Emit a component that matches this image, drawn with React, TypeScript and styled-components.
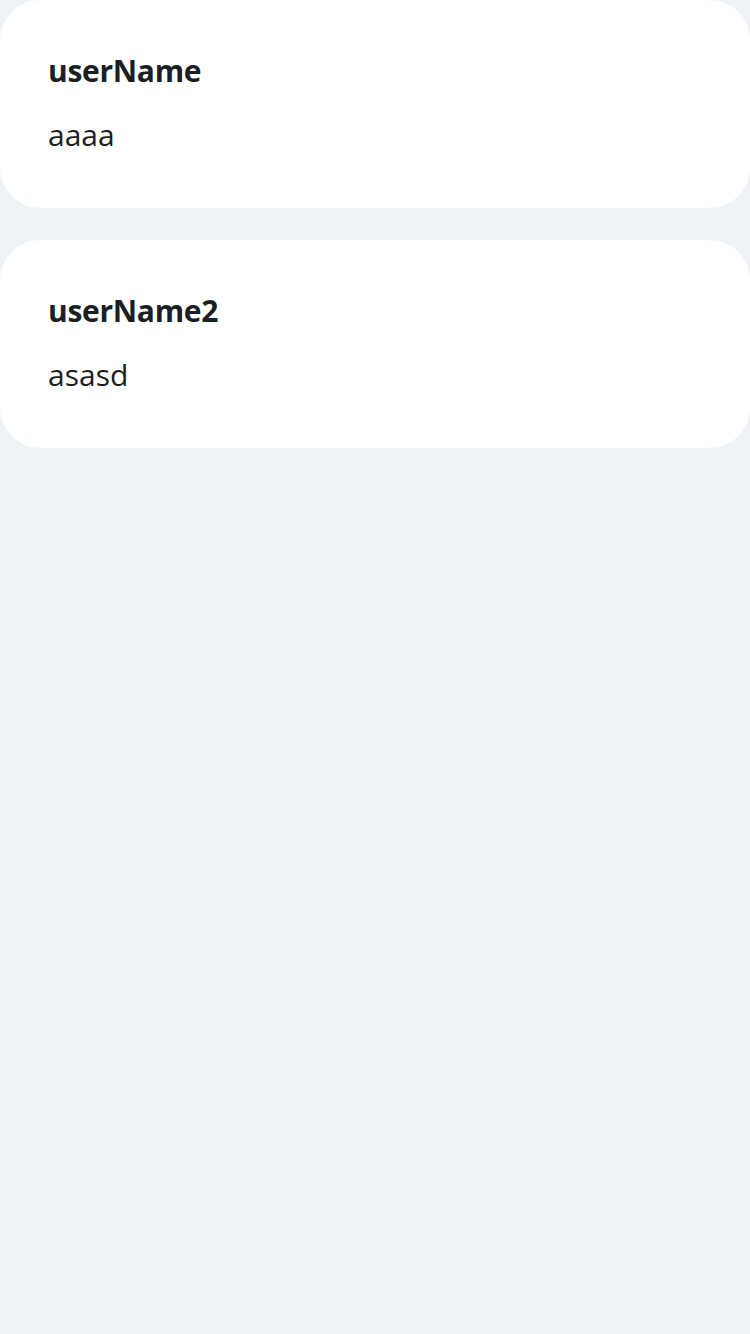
import React from 'react';
import styled, { createGlobalStyle } from 'styled-components';

const GlobalStyle = createGlobalStyle`
  html, body {
    margin: 0;
    padding: 0;
    background-color: #eef3f6;
    font-family: 'Open Sans', 'Noto Sans', sans-serif;
    color: #1b1f23;
  }
`;

const Page = styled.div`
  display: flex;
  flex-direction: column;
  gap: 32px;
  min-height: 1334px;
  background-color: #eef3f6;
`;

const Card = styled.div`
  display: flex;
  flex-direction: column;
  gap: 18px;
  height: 208px;
  box-sizing: border-box;
  padding: 48px 48px 0;
  background-color: #ffffff;
  border-radius: 40px;
`;

const Title = styled.div`
  font-size: 30px;
  font-weight: 700;
  line-height: 46px;
  letter-spacing: -0.3px;
`;

const Content = styled.div`
  font-size: 30px;
  font-weight: 400;
  line-height: 46px;
`;

const users = [
  { name: 'userName', text: 'aaaa' },
  { name: 'userName2', text: 'asasd' },
];

const App: React.FC = () => {
  return (
    <>
      <GlobalStyle />
      <Page>
        {users.map((user) => (
          <Card key={user.name}>
            <Title>{user.name}</Title>
            <Content>{user.text}</Content>
          </Card>
        ))}
      </Page>
    </>
  );
};

export default App;
